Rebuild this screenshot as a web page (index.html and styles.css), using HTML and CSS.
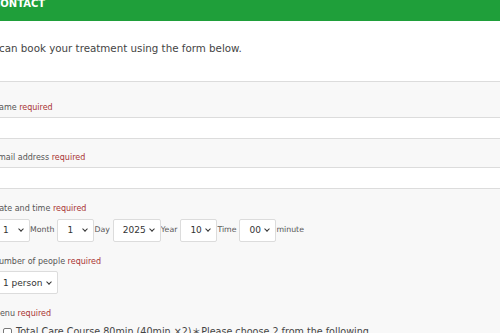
FILE: index.html
```html
<!DOCTYPE html>
<html lang="en">
<head>
    <meta charset="UTF-8">
    <meta name="viewport" content="width=device-width, initial-scale=1.0">
    <title>Contact</title>
    <link rel="stylesheet" href="styles.css">
</head>
<body>
    <div class="page">
        <header class="bar">
            <h1>CONTACT</h1>
        </header>
        <p class="lead">You can book your treatment using the form below.</p>

        <form class="form">
            <div class="field">
                <label class="label">Name <span class="req">required</span></label>
                <input class="text" type="text">
            </div>
            <div class="field">
                <label class="label">Email address <span class="req">required</span></label>
                <input class="text" type="email">
            </div>

            <div class="group">
                <label class="label">Date and time <span class="req">required</span></label>
                <div class="row">
                    <span class="sel"><select><option>1</option><option>12</option></select></span>
                    <span class="unit">Month</span>
                    <span class="sel"><select><option>1</option><option>31</option></select></span>
                    <span class="unit">Day</span>
                    <span class="sel"><select><option>2025</option><option>2026</option></select></span>
                    <span class="unit">Year</span>
                    <span class="sel"><select><option>10</option><option>20</option></select></span>
                    <span class="unit">Time</span>
                    <span class="sel"><select><option>00</option><option>30</option></select></span>
                    <span class="unit">minute</span>
                </div>

                <label class="label">Number of people <span class="req">required</span></label>
                <div class="row">
                    <span class="sel"><select><option>1 person</option><option>2 people</option><option>3 people</option></select></span>
                </div>

                <label class="label">Menu <span class="req">required</span></label>
                <div class="check">
                    <input type="checkbox">
                    <span>Total Care Course 80min (40min ×2)＊Please choose 2 from the following</span>
                </div>
            </div>
        </form>
    </div>
</body>
</html>
```

FILE: styles.css
```css
* {
    margin: 0;
    padding: 0;
    box-sizing: border-box;
    font-family: "DejaVu Sans", Verdana, "Noto Sans CJK JP", sans-serif;
}
body {
    background: #fff;
    overflow: hidden;
}
.page {
    margin: -8px 0 0 -22px;
}
.bar {
    height: 29px;
    padding: 5px 15px 0;
    background-color: #1f9f3a;
}
.bar h1 {
    font-size: 10px;
    line-height: 14px;
    color: #fff;
    font-weight: bold;
}
.lead {
    padding: 20px 0 26px;
    font-size: 10.3px;
    line-height: 14px;
    color: #444;
}
.form {
    background: #f8f8f8;
    border-top: 1px solid #dcdcdc;
    padding-top: 7px;
}
.label {
    display: block;
    padding: 14px 15px 4px;
    font-size: 8px;
    line-height: 10px;
    color: #555;
}
.group .label {
    padding-top: 15px;
}
.req {
    color: #a93434;
}
.text {
    display: block;
    width: 100%;
    height: 22px;
    border: none;
    border-top: 1px solid #dcdcdc;
    border-bottom: 1px solid #dcdcdc;
    background: #fff;
}
.row {
    display: flex;
    align-items: center;
    padding: 0 15px;
}
.unit {
    margin-right: 3px;
    font-size: 7.8px;
    color: #555;
}
.sel {
    position: relative;
    display: block;
}
.sel select {
    appearance: none;
    -webkit-appearance: none;
    height: 23px;
    padding: 0 14px 0 9px;
    border: 1px solid #dcdcdc;
    border-radius: 2px;
    background: #fff;
    font-size: 9px;
    color: #333;
}
.sel::after {
    content: "";
    position: absolute;
    right: 7px;
    top: 9px;
    width: 3px;
    height: 3px;
    border-right: 1.5px solid #333;
    border-bottom: 1.5px solid #333;
    transform: rotate(45deg);
}
.check {
    display: flex;
    align-items: center;
    gap: 4px;
    padding: 2px 15px 0 25px;
    font-size: 9.6px;
    line-height: 14px;
    color: #444;
}
.check input {
    appearance: none;
    -webkit-appearance: none;
    width: 9px;
    height: 9px;
    border: 1px solid #777;
    border-radius: 2px;
    background: #fff;
}
```
